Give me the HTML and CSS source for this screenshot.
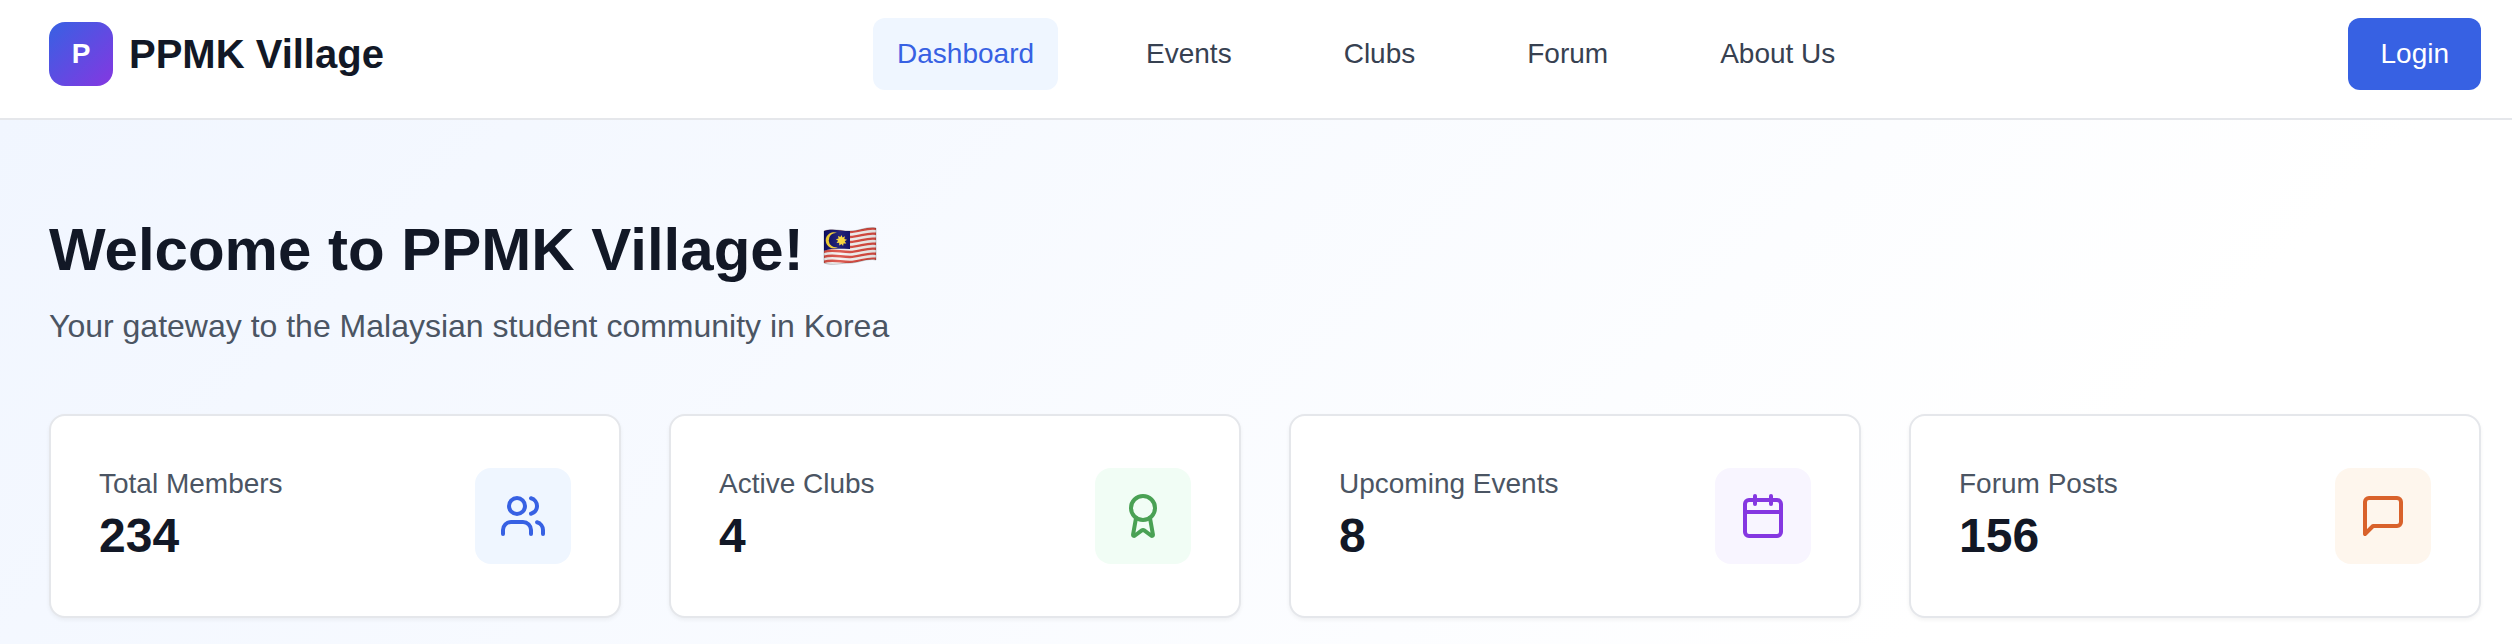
FILE: index.html
```html
<!DOCTYPE html>
<html lang="en">
<head>
    <meta charset="UTF-8">
    <meta name="viewport" content="width=device-width, initial-scale=1.0">
    <title>PPMK Village</title>
    <link rel="stylesheet" href="styles.css">
</head>
<body>

<header class="header">
    <div class="brand">
        <div class="logo">P</div>
        <span class="brand-name">PPMK Village</span>
    </div>
    <nav class="nav">
        <a href="#" class="active">Dashboard</a>
        <a href="#">Events</a>
        <a href="#">Clubs</a>
        <a href="#">Forum</a>
        <a href="#">About Us</a>
    </nav>
    <button class="login" type="button">Login</button>
</header>

<main class="main">
    <h1>
        Welcome to PPMK Village!
        <svg class="flag" viewBox="0 0 54 38" role="img" aria-label="Malaysia">
            <defs>
                <clipPath id="wave">
                    <path d="M1 4C9 1 17 4 27 4S44 -1 53 1V33C44 31 36 36 27 36S9 39 1 36Z"/>
                </clipPath>
                <linearGradient id="shade">
                    <stop offset="0" stop-color="#000" stop-opacity=".1"/>
                    <stop offset=".3" stop-color="#fff" stop-opacity=".1"/>
                    <stop offset=".65" stop-color="#000" stop-opacity=".05"/>
                    <stop offset="1" stop-color="#000" stop-opacity=".1"/>
                </linearGradient>
            </defs>
            <g clip-path="url(#wave)">
                <path fill="#f7f4f3" d="M0 0H54V38H0Z"/>
                <g fill="none" stroke="#dc4d43" stroke-width="2.4">
                    <path d="M0 5C9 2 17 5 27 5S44 0 54 2"/>
                    <path d="M0 10C9 7 17 10 27 10S44 5 54 7"/>
                    <path d="M0 15C9 12 17 15 27 15S44 10 54 12"/>
                    <path d="M0 20C9 17 17 20 27 20S44 15 54 17"/>
                    <path d="M0 25C9 22 17 25 27 25S44 20 54 22"/>
                    <path d="M0 30C9 27 17 30 27 30S44 25 54 27"/>
                    <path d="M0 35C9 32 17 35 27 35S44 30 54 32"/>
                </g>
                <path fill="#0d0d6b" d="M0 0H27V22C17 22 9 21 0 24Z"/>
                <path fill="#fbd531" d="M14 6A8 8 0 1 0 15 20A7.200 7.200 0 1 1 14 6Z"/>
                <path fill="#fbd531" d="M18.500 8l1 2.600 2.500-1.300-.7 2.700 2.700.7-2.300 1.600 1.600 2.300-2.800-.2-.4 2.700-1.600-2.200-2.200 1.700-.1-2.800-2.700.2 1.600-2.200-2.200-1.600 2.700-.7-.7-2.600 2.500 1.100z"/>
                <path fill="url(#shade)" d="M0 0H54V38H0Z"/>
            </g>
            <path fill="none" stroke="#000" stroke-opacity=".2" d="M1 4C9 1 17 4 27 4S44 -1 53 1V33C44 31 36 36 27 36S9 39 1 36Z"/>
        </svg>
    </h1>
    <p class="subtitle">Your gateway to the Malaysian student community in Korea</p>

    <section class="stats">
        <div class="card">
            <div>
                <p class="label">Total Members</p>
                <p class="value">234</p>
            </div>
            <div class="icon blue">
                <svg viewBox="0 0 24 24">
                    <path d="M16 21v-2a4 4 0 0 0-4-4H6a4 4 0 0 0-4 4v2"/>
                    <circle cx="9" cy="7" r="4"/>
                    <path d="M22 21v-2a4 4 0 0 0-3-3.870"/>
                    <path d="M16 3.130a4 4 0 0 1 0 7.750"/>
                </svg>
            </div>
        </div>
        <div class="card">
            <div>
                <p class="label">Active Clubs</p>
                <p class="value">4</p>
            </div>
            <div class="icon green">
                <svg viewBox="0 0 24 24">
                    <path d="m15.477 12.890 1.515 8.526a.5.5 0 0 1-.81.47l-3.580-2.687a1 1 0 0 0-1.197 0l-3.586 2.686a.5.5 0 0 1-.81-.469l1.514-8.526"/>
                    <circle cx="12" cy="8" r="6"/>
                </svg>
            </div>
        </div>
        <div class="card">
            <div>
                <p class="label">Upcoming Events</p>
                <p class="value">8</p>
            </div>
            <div class="icon purple">
                <svg viewBox="0 0 24 24">
                    <path d="M8 2v4"/>
                    <path d="M16 2v4"/>
                    <rect x="3" y="4" width="18" height="18" rx="2"/>
                    <path d="M3 10h18"/>
                </svg>
            </div>
        </div>
        <div class="card">
            <div>
                <p class="label">Forum Posts</p>
                <p class="value">156</p>
            </div>
            <div class="icon orange">
                <svg viewBox="0 0 24 24">
                    <path d="M21 15a2 2 0 0 1-2 2H7l-4 4V5a2 2 0 0 1 2-2h14a2 2 0 0 1 2 2z"/>
                </svg>
            </div>
        </div>
    </section>
</main>

</body>
</html>
```
FILE: styles.css
```css
* {
    box-sizing: border-box;
}
body {
    margin: 0;
    font-family: "Liberation Sans", Arial, sans-serif;
    font-size: 28px;
    line-height: 40px;
    color: #121826;
    background: #fff;
}
h1, p {
    margin: 0;
}

/* top bar */
.header {
    display: flex;
    align-items: center;
    justify-content: space-between;
    padding: 18px 31px 28px 49px;
    background: #fff;
    border-bottom: 2px solid #e5e7eb;
}
.brand {
    display: flex;
    align-items: center;
    gap: 16px;
}
.logo {
    display: flex;
    align-items: center;
    justify-content: center;
    width: 64px;
    height: 64px;
    border-radius: 16px;
    background: linear-gradient(135deg, #3761e3, #8537e1);
    color: #fff;
    font-weight: bold;
}
.brand-name {
    font-size: 40px;
    font-weight: bold;
}
.nav {
    display: flex;
    gap: 64px;
}
.nav a {
    padding: 16px 24px;
    border-radius: 12px;
    color: #374151;
    text-decoration: none;
}
.nav a.active {
    background: #eff6ff;
    color: #3761e3;
}
.login {
    padding: 16px 32px;
    border: none;
    border-radius: 12px;
    background: #3761e3;
    color: #fff;
    font: inherit;
    cursor: pointer;
}

/* dashboard */
.main {
    padding: 94px 31px 26px 49px;
    background: linear-gradient(135deg, #f1f6ff, #fff 80%);
}
h1 {
    margin-bottom: 16px;
    font-size: 60px;
    line-height: 72px;
}
.flag {
    width: 54px;
    height: 38px;
    margin-left: 3px;
    vertical-align: 5px;
}
.subtitle {
    margin-bottom: 64px;
    font-size: 32px;
    line-height: 48px;
    color: #4b5563;
}
.stats {
    display: grid;
    grid-template-columns: repeat(4, 1fr);
    gap: 48px;
}
.card {
    display: flex;
    align-items: center;
    justify-content: space-between;
    padding: 48px;
    background: #fff;
    border: 2px solid #e5e7eb;
    border-radius: 16px;
    box-shadow: 0 2px 4px rgba(0, 0, 0, 0.05);
}
.label {
    color: #4b5563;
}
.value {
    font-size: 48px;
    font-weight: bold;
    line-height: 64px;
}
.icon {
    padding: 24px;
    border-radius: 16px;
}
.icon svg {
    display: block;
    width: 48px;
    height: 48px;
    fill: none;
    stroke: currentColor;
    stroke-width: 2;
    stroke-linecap: round;
    stroke-linejoin: round;
}
.blue {
    background: #eff6ff;
    color: #3761e3;
}
.green {
    background: #f1fdf5;
    color: #4aa154;
}
.purple {
    background: #f8f5ff;
    color: #8537e1;
}
.orange {
    background: #fef6ed;
    color: #d9622b;
}
```
